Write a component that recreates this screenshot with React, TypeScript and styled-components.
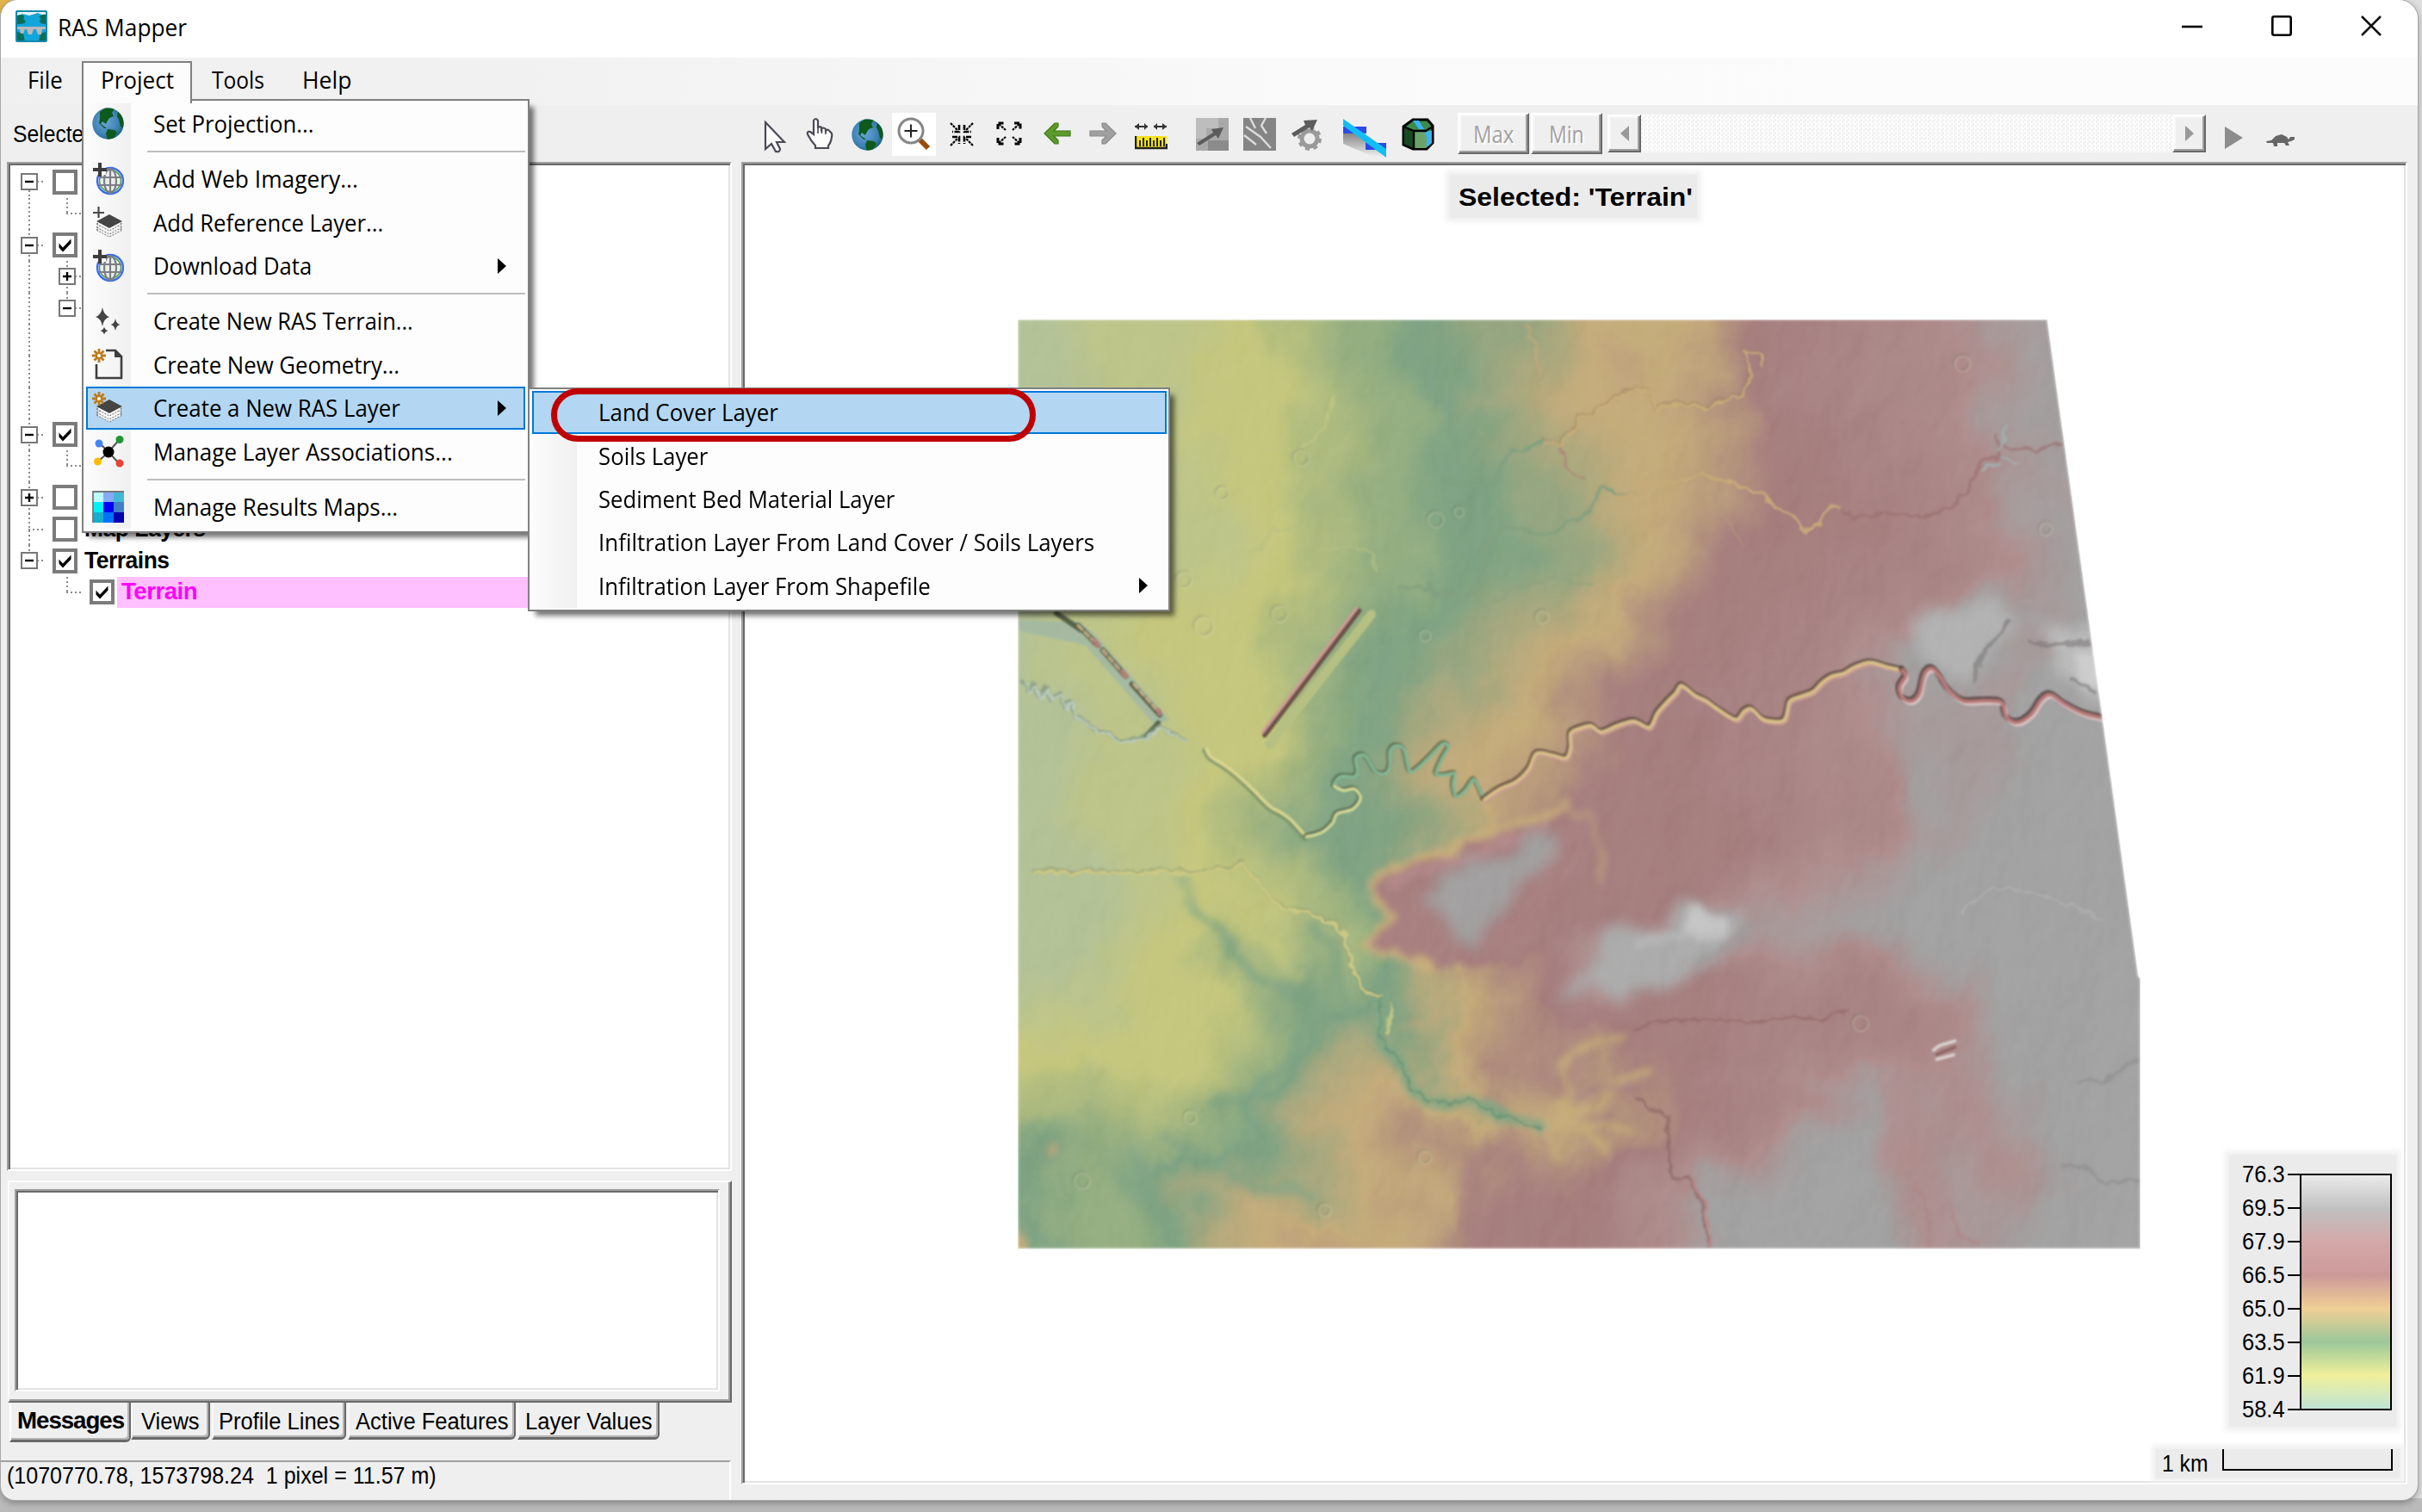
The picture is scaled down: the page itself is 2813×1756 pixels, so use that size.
import React, { useLayoutEffect, useRef, useState } from "react";
import styled, { createGlobalStyle, css } from "styled-components";

const UI = `"Open Sans", "Noto Sans", sans-serif`;
const CLASSIC = `"Liberation Sans", Arial, sans-serif`;

const Global = createGlobalStyle`
  * { box-sizing: border-box; }
  html, body { margin: 0; padding: 0; background: #bdbdbd; }
  body { width: 2813px; height: 1756px; overflow: hidden; font-family: ${UI}; font-size: 27px; color: #000; }
  svg { display: block; }
`;

/* ---------- text fitted to a fixed advance ---------- */

const FitOuter = styled.span<{ $w: number }>`
  display: inline-block;
  width: ${(p) => p.$w}px;
  white-space: pre;
  flex: none;
`;
const FitInner = styled.span`
  display: inline-block;
  transform-origin: left center;
`;
function Fit({ w, children }: { w: number; children: string }) {
  const ref = useRef<HTMLSpanElement>(null);
  const [k, setK] = useState(1);
  useLayoutEffect(() => {
    if (ref.current && ref.current.offsetWidth) setK(w / ref.current.offsetWidth);
  }, [w, children]);
  return (
    <FitOuter $w={w}>
      <FitInner ref={ref} style={{ transform: `scaleX(${k})` }}>
        {children}
      </FitInner>
    </FitOuter>
  );
}

/* ---------- window frame ---------- */

const Desktop = styled.div`
  width: 2813px;
  height: 1756px;
  padding: 0 5px 14px 1px;
  background: linear-gradient(to right, transparent 0 1400px, #dedede 1400px) no-repeat 0 0 / 100% 1740px,
    linear-gradient(to bottom, #e2b64c 0, #c9b58a 120px, #d4d4d4 260px, #d2d2d2 1650px, #b9b9b9 1756px);
  overflow: hidden;
`;
const Window = styled.div`
  position: relative;
  display: flex;
  flex-direction: column;
  width: 2807px;
  height: 1742px;
  background: #efefef;
  border-radius: 20px 22px 18px 16px;
  box-shadow: 0 0 0 1px #a8a8a8, 0 3px 8px rgba(0, 0, 0, 0.35);
`;
const TitleBar = styled.div`
  display: flex;
  align-items: center;
  height: 67px;
  flex: none;
  background: #fff;
  padding: 0 42px 7px 17px;
  border-radius: 20px 22px 0 0;
`;
const TitleText = styled.div`
  margin: 2px 0 0 12px;
  flex: 1;
`;
const Controls = styled.div`
  display: flex;
  align-items: center;
  gap: 80px;
`;
const MenuBar = styled.div`
  display: flex;
  height: 55px;
  flex: none;
  padding: 4px 0 0 9px;
  background: linear-gradient(to right, #f0f0f0, #f1f1f1 20%, #fbfbfb 60%, #fcfcfc);
`;
const MenuHead = styled.div<{ $open?: boolean; $w: number }>`
  display: flex;
  align-items: center;
  justify-content: center;
  width: ${(p) => p.$w}px;
  height: 47px;
  padding-bottom: 4px;
  ${(p) =>
    p.$open &&
    css`
      position: relative;
      z-index: 12;
      border: 2px solid #808080;
      border-bottom: none;
      background: #fcfcfc;
      height: 49px;
      padding-bottom: 8px;
    `}
`;
const ToolBar = styled.div`
  display: flex;
  align-items: flex-start;
  height: 66px;
  flex: none;
  background: #efefef;
`;
const SelectedCaption = styled.div`
  width: 871px;
  flex: none;
  padding: 19px 0 0 14px;
  font-family: ${CLASSIC};
`;
const Tool = styled.div<{ $gap: number; $w: number; $on?: boolean; $top?: number }>`
  flex: none;
  margin-left: ${(p) => p.$gap}px;
  margin-top: ${(p) => p.$top ?? 9}px;
  width: ${(p) => p.$w}px;
  height: 50px;
  display: flex;
  align-items: center;
  justify-content: center;
  background: ${(p) => (p.$on ? "#fff" : "transparent")};
`;
const RaisedButton = styled.div<{ $w: number; $h: number; $gap?: number; $top: number }>`
  flex: none;
  display: flex;
  align-items: center;
  justify-content: center;
  width: ${(p) => p.$w}px;
  height: ${(p) => p.$h}px;
  margin-left: ${(p) => p.$gap ?? 0}px;
  margin-top: ${(p) => p.$top}px;
  color: #a2a2a2;
  text-shadow: 2px 2px 0 #fff;
  background: #efefef;
  border: 2px solid;
  border-color: #fff #696969 #696969 #fff;
  box-shadow: inset -2px -2px 0 #a0a0a0, inset 2px 2px 0 #f8f8f8;
`;
const Track = styled.div`
  width: 617px;
  height: 44px;
  margin-top: 11px;
  flex: none;
  background: repeating-conic-gradient(#fff 0 25%, #f1f1f1 0 50%) 0 0 / 5px 5px;
`;

const Body = styled.div`
  display: flex;
  flex: 1;
  min-height: 0;
`;
const LeftColumn = styled.div`
  display: flex;
  flex-direction: column;
  width: 849px;
  margin-right: 11px;
  flex: none;
`;
const sunken = css`
  background: #fff;
  border: 2px solid;
  border-color: #a0a0a0 #fff #fff #a0a0a0;
  box-shadow: inset 2px 2px 0 #696969, inset -2px -2px 0 #e3e3e3;
`;
const TreePanel = styled.div`
  ${sunken}
  height: 1172px;
  margin-left: 7px;
  padding: 3px 2px 0 14px;
  overflow: hidden;
  flex: none;
`;
const TreeRow = styled.div`
  display: flex;
  align-items: center;
  height: 36.67px;
  font: bold 27px ${CLASSIC};
`;
type V = "none" | "full" | "top" | "bottom";
const Gutter = styled.div<{ $w: number; $x: number; $v: V; $h?: number }>`
  flex: none;
  display: flex;
  align-items: center;
  width: ${(p) => p.$w}px;
  height: 100%;
  padding-left: ${(p) => p.$x - 9}px;
  background-repeat: no-repeat;
  background-image: repeating-linear-gradient(to bottom, #8a8a8a 0 2px, transparent 2px 5px),
    repeating-linear-gradient(to right, #8a8a8a 0 2px, transparent 2px 5px);
  background-size: 2px ${(p) => (p.$v === "none" ? 0 : p.$v === "full" ? 100 : 50)}%, ${(p) => p.$h ?? 0}px 2px;
  background-position: ${(p) => p.$x}px ${(p) => (p.$v === "bottom" ? "100%" : "0")}, ${(p) => p.$x}px 50%;
`;
const ExpanderBox = styled.span`
  display: flex;
  width: 20px;
  height: 20px;
  border: 2px solid #777;
  background: #fff;
`;
function Expander({ plus }: { plus?: boolean }) {
  return (
    <ExpanderBox>
      <svg width="16" height="16" viewBox="0 0 16 16">
        <path d={plus ? "M3 8H13M8 3V13" : "M3 8H13"} stroke="#000" strokeWidth="2.4" />
      </svg>
    </ExpanderBox>
  );
}
const CheckBox = styled.span`
  flex: none;
  width: 29px;
  height: 29px;
  border: 4px solid #7b7b7b;
  background: #fff;
`;
function Check({ on }: { on?: boolean }) {
  return (
    <CheckBox>
      {on && (
        <svg width="21" height="21" viewBox="0 0 21 21">
          <path d="M3.5 8.5L8 13.5L17.5 3.5V8.5L8 18.5L3.5 13.5Z" fill="#000" />
        </svg>
      )}
    </CheckBox>
  );
}
const NodeName = styled.div<{ $hot?: boolean }>`
  display: flex;
  align-items: center;
  height: 100%;
  flex: 1;
  margin-left: 3px;
  padding-left: 5px;
  letter-spacing: -0.5px;
  color: ${(p) => (p.$hot ? "#ff00ff" : "#000")};
  background: ${(p) => (p.$hot ? "#ffc0ff" : "transparent")};
`;
const TabPanel = styled.div`
  margin: 11px 0 0 8px;
  height: 258px;
  flex: none;
  padding: 8px 12px 11px 6px;
  border: 2px solid;
  border-color: #fff #696969 #696969 #fff;
  box-shadow: inset -2px -2px 0 #a0a0a0;
`;
const MessageBox = styled.div`
  ${sunken}
  height: 100%;
`;
const Tabs = styled.div`
  display: flex;
  align-items: flex-start;
  height: 67px;
  flex: none;
  margin-left: 10px;
  font-family: ${CLASSIC};
`;
const Tab = styled.div<{ $w: number; $gap: number; $active?: boolean }>`
  display: flex;
  align-items: center;
  justify-content: center;
  width: ${(p) => p.$w}px;
  height: ${(p) => (p.$active ? 46 : 43)}px;
  margin-left: ${(p) => p.$gap}px;
  padding-top: ${(p) => (p.$active ? 0 : 4)}px;
  font-weight: ${(p) => (p.$active ? 700 : 400)};
  letter-spacing: ${(p) => (p.$active ? -1 : 0)}px;
  border: solid #696969;
  border-width: 0 2px 3px 0;
  border-left: 2px solid ${(p) => (p.$active ? "#fff" : "#f8f8f8")};
  border-radius: 0 0 6px 0;
  box-shadow: inset -2px -2px 0 #b4b4b4;
`;
const StatusBar = styled.div`
  flex: 1;
  margin-right: 1px;
  border-top: 2px solid #a0a0a0;
  border-right: 2px solid #fff;
  padding: 1px 0 0 7px;
  font-family: ${CLASSIC};
  border-bottom-left-radius: 16px;
`;
const MapPanel = styled.div`
  ${sunken}
  position: relative;
  width: 1935px;
  height: 1536px;
  padding: 181px 0 0 319px;
`;

/* items floating over the map canvas */
const Plate = styled.div`
  position: absolute;
  background: #ebebeb;
  box-shadow: 0 0 6px 5px #f1f1f1;
`;
const TitlePlate = styled(Plate)`
  top: 13px;
  left: 821px;
  width: 287px;
  height: 50px;
  padding: 2px 0 0 10px;
  font: bold 29px ${CLASSIC};
  display: flex;
  align-items: center;
`;
const LegendPlate = styled(Plate)`
  top: 1151px;
  right: 11px;
  width: 194px;
  height: 316px;
  display: flex;
  padding: 4px 0 0 15px;
  font: 27px ${CLASSIC};
`;
const LegendLabels = styled.div`
  display: flex;
  flex-direction: column;
  flex: none;
`;
const LegendItem = styled.div`
  display: flex;
  flex: none;
  align-items: center;
  height: 38.95px;
  width: 68px;
  justify-content: space-between;
`;
const Tick = styled.span`
  width: 15px;
  height: 2px;
  background: #000;
`;
const Ramp = styled.div`
  flex: none;
  width: 107px;
  height: 275px;
  margin-top: 18px;
  margin-left: -1px;
  border: 2px solid #000;
  background: linear-gradient(#ebebeb 0, #c0c0c0 14.3%, #d4a8a8 28.6%, #cc9999 42.9%, #f0cf95 57.1%, #9cc79a 71.4%, #f0f09a 85.7%, #c0e3d6 100%);
`;
const ScalePlate = styled(Plate)`
  right: 7px;
  bottom: 5px;
  width: 283px;
  height: 34px;
  display: flex;
  padding-left: 7px;
  font: 27px/34px ${CLASSIC};
`;
const ScaleBracket = styled.div`
  width: 198px;
  height: 25px;
  margin-left: 16px;
  border: 2px solid #000;
  border-top: none;
`;

/* ---------- drop-down menus ---------- */

const Menu = styled.div<{ $x: number; $y: number; $w: number; $pad: number }>`
  position: absolute;
  z-index: 10;
  left: ${(p) => p.$x}px;
  top: ${(p) => p.$y}px;
  width: ${(p) => p.$w}px;
  padding: 2px ${(p) => p.$pad}px ${(p) => p.$pad}px 3px;
  border: 2px solid #808080;
  background: #fdfdfd;
  box-shadow: 7px 7px 6px -2px rgba(0, 0, 0, 0.55);
`;
const MenuColumn = styled.div`
  background: linear-gradient(to right, #fcfcfc, #f0f0f0) no-repeat 0 0 / 52px 100%;
`;
const MenuRow = styled.div<{ $hot?: boolean }>`
  display: flex;
  align-items: center;
  height: 50.4px;
  border: 2px solid ${(p) => (p.$hot ? "#0078d7" : "transparent")};
  background: ${(p) => (p.$hot ? "#b3d7f3" : "transparent")};
  padding: 0 20px 1px 5px;
`;
const MenuIcon = styled.span<{ $w: number }>`
  width: ${(p) => p.$w}px;
  flex: none;
`;
const MenuText = styled.span`
  flex: 1;
  display: flex;
`;
const Separator = styled.div`
  height: 13.8px;
  display: flex;
  align-items: center;
  padding-left: 71px;
  &::after {
    content: "";
    flex: 1;
    height: 2px;
    background: #bdbdbd;
  }
`;
const Ring = styled.div`
  position: absolute;
  z-index: 14;
  left: 639px;
  top: 451px;
  width: 563px;
  height: 62px;
  border: 7px solid #c00000;
  border-radius: 32px;
`;
const SubArrow = () => (
  <svg width="10" height="18" viewBox="0 0 10 18">
    <path d="M0 0L10 9L0 18Z" fill="#000" />
  </svg>
);

/* ---------- icons ---------- */

const AppIcon = () => (
  <svg width="37" height="37" viewBox="0 0 37 37">
    <rect width="37" height="37" rx="2" fill="#12a5dc" />
    <path d="M2 2H35V7L26 3L16 6L8 4L2 8Z" fill="#e8f4f4" />
    <path d="M2 6C9 3 12 7 9 10C14 13 12 16 4 16H2ZM35 5C29 4 25 8 30 10C25 13 30 16 35 16Z" fill="#0a6e57" />
    <path d="M2 25L9 27L11 36H2ZM35 25L29 27L27 36H35Z" fill="#0a6e57" />
    <path d="M1 19H36V22H31L30 28H26L24 22H21L19 28H15L13 22H11L9 27H6L5 22H1Z" fill="#b9b9b9" />
    <rect x="1" y="1" width="35" height="35" rx="2" fill="none" stroke="#1389ac" strokeWidth="2" />
  </svg>
);
const Globe = ({ s = 37 }: { s?: number }) => (
  <svg width={s} height={s} viewBox="0 0 37 37">
    <defs>
      <radialGradient id="sea" cx=".42" cy=".45" r=".6">
        <stop offset="0" stopColor="#6aa5d6" />
        <stop offset=".7" stopColor="#3d80b5" />
        <stop offset="1" stopColor="#17637a" />
      </radialGradient>
      <clipPath id="ball"><circle cx="18.5" cy="18.5" r="18" /></clipPath>
    </defs>
    <circle cx="18.5" cy="18.5" r="18.2" fill="url(#sea)" />
    <g clipPath="url(#ball)" fill="#0d5a1c">
      <path d="M9 5L16 0L26 1L23 6L25 10L20 12L18 15L16 19L12 16L10 19L14 22L17 24L14 24L8 18L9 12Z" />
      <path d="M18 25L26 26L29 29L26 34L23 38H18L16 30Z" />
      <path d="M30 5L37 10V24L33 22L31 14L29 10Z" />
    </g>
  </svg>
);
const WebGlobe = () => (
  <svg width="37" height="40" viewBox="0 0 37 40">
    <circle cx="21" cy="22" r="15" fill="#e9efe9" stroke="#3b6cf0" strokeWidth="2.4" />
    <circle cx="21" cy="22" r="12.5" fill="none" stroke="#4a9a50" strokeWidth="1.5" />
    <g stroke="#7d7d86" strokeWidth="2.2" fill="none">
      <path d="M8 18H34M8 27H34M21 9V36" />
      <ellipse cx="21" cy="22" rx="7" ry="14" />
    </g>
    <path d="M0 0H16V15H0Z" fill="#f6f6f6" />
    <path d="M1 9H17M9 1V17" stroke="#3c3c3c" strokeWidth="4" />
  </svg>
);
const Sun = () => (
  <g stroke="#bd7a18" strokeWidth="2.8">
    <path d="M8 0V16M0 8H16M2.5 2.5L13.5 13.5M13.5 2.5L2.5 13.5" />
    <circle cx="8" cy="8" r="2" fill="#fff" stroke="none" />
  </g>
);
const Layers = ({ sun }: { sun?: boolean }) => (
  <svg width="37" height="37" viewBox="0 0 37 37">
    <g fill="#fafafa" stroke="#777" strokeWidth="1.1">
      <path d="M5 27L20 20L35 27L20 35Z" strokeDasharray="2 1.4" />
      <path d="M5 24L20 17L35 24L20 32Z" strokeDasharray="2 1.4" />
      <path d="M5 20L20 13L35 20L20 28Z" strokeDasharray="2 1.4" />
    </g>
    <path d="M5 17L20 9L35 17L20 25Z" fill="#454545" />
    {sun ? <Sun /> : <path d="M1 7H14M7.5 0V13" stroke="#4a4a4a" strokeWidth="2.2" />}
  </svg>
);
const Sparkles = () => (
  <svg width="37" height="37" viewBox="0 0 37 37" fill="#444">
    <path d="M12 3Q13.5 12 20 14Q13.5 16 12 25Q10.5 16 4 14Q10.5 12 12 3Z" />
    <path d="M27 16Q28 22 32.5 23Q28 24 27 30Q26 24 21.5 23Q26 22 27 16Z" />
    <path d="M14 26Q15 29 18.5 30Q15 31 14 34.5Q13 31 9.5 30Q13 29 14 26Z" />
  </svg>
);
const NewDoc = () => (
  <svg width="37" height="37" viewBox="0 0 37 37">
    <path d="M5 18V34H34V9L27 2H16" fill="none" stroke="#3f3f3f" strokeWidth="2.6" />
    <path d="M26 1L35 10H26Z" fill="#3f3f3f" />
    <Sun />
  </svg>
);
const Nodes = () => (
  <svg width="37" height="37" viewBox="0 0 37 37">
    <path d="M8 8L19 19L32 4M7 30L19 19L32 33" stroke="#555" strokeWidth="2" fill="none" />
    <circle cx="19" cy="19" r="6.5" fill="#000" />
    <circle cx="8" cy="9" r="4.5" fill="#4285f4" />
    <circle cx="32" cy="4.5" r="4.5" fill="#1e9632" />
    <circle cx="6.5" cy="30" r="4.5" fill="#fbbc05" />
    <circle cx="32" cy="32" r="4.5" fill="#ea4335" />
  </svg>
);
const mosaic = ["#bff", "#86aaf5", "#43b7d6", "#00f0f5", "#0000f5", "#4180c8", "#18adc8", "#0074f8", "#0000b0"];
const Mosaic = () => (
  <svg width="37" height="37" viewBox="0 0 37 37">
    {mosaic.map((c, i) => (
      <rect key={i} x={1 + (i % 3) * 12} y={1 + Math.floor(i / 3) * 12} width="12" height="12" fill={c} />
    ))}
    <path d="M1 37V1H37" fill="none" stroke="#777" strokeWidth="1.8" />
  </svg>
);
const Cursor = () => (
  <svg width="26" height="38" viewBox="0 0 26 38">
    <path d="M2 2V33L9 27L14 36Q19 37 19 33L15 25H24Z" fill="#fcfcfc" stroke="#4a4a58" strokeWidth="2.2" />
  </svg>
);
const Hand = () => (
  <svg width="32" height="38" viewBox="0 0 32 38">
    <path
      d="M9 20V4Q11 0 14 4V13Q15 10 18 12V14Q20 11 23 14V16Q26 13 28 17Q31 18 30 23Q29 30 26 33V36H11V33Q6 28 2 20Q1 16 5 17Z"
      fill="#fdfdfd" stroke="#4a4a58" strokeWidth="2.2"
    />
    <path d="M14 12V19M18.5 13V19M23 15V20" stroke="#4a4a58" strokeWidth="1.6" />
  </svg>
);
const Magnifier = () => (
  <svg width="40" height="40" viewBox="0 0 40 40">
    <path d="M26 26L36 36" stroke="#9c4a08" strokeWidth="6" />
    <circle cx="16" cy="16" r="14" fill="#fff" stroke="#868686" strokeWidth="3" />
    <path d="M8.5 16H23.5M16 8.5V23.5" stroke="#222" strokeWidth="2" />
  </svg>
);
const Collapse = () => (
  <svg width="28" height="28" viewBox="0 0 28 28" fill="none" stroke="#000" strokeWidth="2.2">
    <path d="M1 1L9 9M27 1L19 9M1 27L9 19M27 27L19 19" strokeDasharray="3 1" />
    <path d="M11 3V11H3M17 3V11H25M3 17H11V25M25 17H17V25" strokeWidth="2.6" strokeDasharray="6 1.5" />
  </svg>
);
const Expand = () => (
  <svg width="30" height="28" viewBox="0 0 30 28" fill="none" stroke="#000" strokeWidth="2.2">
    <path d="M3 3L11 10M27 3L19 10M3 25L11 18M27 25L19 18" strokeDasharray="3 1" />
    <path d="M2 9V2H9M21 2H28V9M2 19V26H9M28 19V26H21" strokeWidth="3" strokeDasharray="6 1.5" />
  </svg>
);
const Arrow = ({ color, edge, flip }: { color: string; edge: string; flip?: boolean }) => (
  <svg width="32" height="28" viewBox="0 0 32 28">
    <g transform={flip ? "translate(32 0) scale(-1 1)" : undefined}>
      <path d="M1 14L13 2L17 2V6L12 11H31V17H12L17 22V26H13Z" fill={color} stroke={edge} strokeWidth="1.2" />
    </g>
  </svg>
);
const Ruler = () => (
  <svg width="38" height="32" viewBox="0 0 38 32">
    <path d="M0 5H15M22 5H37" stroke="#333" strokeWidth="2" />
    <path d="M0 5L5 1V9ZM37 5L32 1V9Z" fill="#333" />
    <path d="M15 5L11 1V9ZM22 5L26 1V9Z" fill="#333" />
    <rect x="1" y="16" width="36" height="13" fill="#f4e11b" />
    <path d="M1 16V30H37V25" stroke="#222" strokeWidth="2.4" fill="none" />
    <path d="M6 28V21M10 28V18M14 28V21M18 28V18M22 28V21M26 28V18M30 28V21M34 28V18" stroke="#222" strokeWidth="2" />
  </svg>
);
const Velocity = () => (
  <svg width="38" height="38" viewBox="0 0 38 38">
    <rect width="38" height="38" fill="#a9a9a9" />
    <path d="M0 0H26V12H12V24H0Z" fill="#bdbdbd" />
    <path d="M14 26H38V38H14Z" fill="#8b8b8b" />
    <path d="M1 29L20 17L18 13L32 11L26 24L23 20L4 32Z" fill="#5c5c5c" />
  </svg>
);
const Particles = () => (
  <svg width="38" height="38" viewBox="0 0 38 38">
    <rect width="38" height="38" fill="#858585" />
    <path d="M8 0L14 12M26 0L21 9L27 18M3 10L20 22L32 35M1 20L15 31" stroke="#dcdcdc" strokeWidth="2.4" fill="none" />
  </svg>
);
const GearArrow = () => (
  <svg width="37" height="38" viewBox="0 0 37 38">
    <circle cx="22" cy="24" r="9" fill="#eee" stroke="#9a9a9a" strokeWidth="5" />
    <circle cx="22" cy="24" r="12.5" fill="none" stroke="#9a9a9a" strokeWidth="3" strokeDasharray="5 4.8" />
    <path d="M1 18L17 8L15 3L31 2L25 15L22 11L4 22Z" fill="#5c5c5c" />
  </svg>
);
const Profile = () => (
  <svg width="52" height="46" viewBox="0 0 52 46">
    <defs>
      <linearGradient id="soil" x1="0" y1="0" x2="0" y2="1">
        <stop offset="0" stopColor="#777" />
        <stop offset="1" stopColor="#efefef" />
      </linearGradient>
    </defs>
    <path d="M1 14L28 20V32H51V45H36L1 30Z" fill="url(#soil)" />
    <path d="M1 10H28V18H1ZM27 29H51V37H27Z" fill="#2f48ea" />
    <path d="M1 1L51 36V46L1 9Z" fill="#13bdf5" />
  </svg>
);
const Cube = () => (
  <svg width="38" height="38" viewBox="0 0 38 38">
    <path d="M2 10L13 2H30L36 9V29L29 36H13L2 31Z" fill="#3e8a4b" stroke="#000" strokeWidth="3" />
    <path d="M3 10L14 15V35L3 30Z" fill="#174a22" />
    <path d="M14 15H35V29L28 35H14Z" fill="#6aa36a" />
    <path d="M13 3H20L26 13H20ZM27 15H34V30L29 34V24Z" fill="#39b3f5" />
    <path d="M2 10L14 15H28L36 10M14 15V36" stroke="#000" strokeWidth="2.4" fill="none" />
  </svg>
);
const Turtle = () => (
  <svg width="34" height="17" viewBox="0 0 34 17">
    <path d="M0 9L6 8L11 3L18 1L24 4L26 7L28 4H33V7L29 9L25 10L27 14H23L21 11H13L13 15H9L8 11L1 11Z" fill="#666" />
  </svg>
);
const Minimize = () => (
  <svg width="24" height="24" viewBox="0 0 24 24"><path d="M0 13H24" stroke="#000" strokeWidth="2.6" /></svg>
);
const Maximize = () => (
  <svg width="24" height="24" viewBox="0 0 24 24">
    <rect x="1.3" y="1.3" width="21.4" height="21.4" rx="2" fill="none" stroke="#000" strokeWidth="2.6" />
  </svg>
);
const Close = () => (
  <svg width="24" height="24" viewBox="0 0 24 24"><path d="M1 1L23 23M23 1L1 23" stroke="#111" strokeWidth="2.5" /></svg>
);
const Tri = ({ left }: { left?: boolean }) => (
  <svg width="10" height="18" viewBox="0 0 10 18">
    <path d={left ? "M10 0L0 9L10 18Z" : "M0 0L10 9L0 18Z"} fill="#999" />
  </svg>
);
const Play = () => (
  <svg width="22" height="26" viewBox="0 0 22 26"><path d="M1 0L22 13L1 26Z" fill="#8c8c8c" /></svg>
);

/* ---------- terrain raster ---------- */

/* Sampled surface: each letter is a third of a ramp class, 'a' lowest. */
const DEM = [
  "bbccccddeeffgghhhijjjjlmmnnoooprrssss",
  "bbccccdddeffggghiijkjjkmmnnooopprrsss",
  "bbccccddddeffghiijjjjklmnnnoooprrssss",
  "bbcccddddeefffghiijjjjkkmmnnooprsrsss",
  "bbbcccdddeeffgghhiijjjklmmnnnoopqrsss",
  "bbbcccdddefffggghhijjjklmmmnnnoqrrrss",
  "bbbccccddeeffggghhijjkklmmmmnnoprsrss",
  "bbbccccddeefffggghhijkmmmmnnnnooprsss",
  "bbbcccddddeffggghhijklmmmmnnnnooprsss",
  "bcccddddeeffgghhiijjlmmmnnnooqsssrsss",
  "bcccddddeefgghhiijjklmmnnnoqsttsqsttt",
  "bccccddddefgghhijjlmmmnnnooprssqsssuu",
  "bbcccdddefgghiijjllmmmnnnoopqrrrsssss",
  "bbcccddddfgghijjjklmmmmnnoopqrrrsssss",
  "bbccccddefghijjjkklmmmnnnooopsrrsssss",
  "bbcccddeefgghijkklmmmmmnnnoopsrrsssss",
  "bbcccdeefgggghijlmnmmmmmnnooorrssssss",
  "bbbccddeefgghiloqommmmmnnoqqqssssssss",
  "bbbcccddeeffimpqommmmmnqpqrrsssssssss",
  "bbbccdeddeefgkoonmmmnqsrrrsssssssssss",
  "bbbcddfeeffghklmlnqsssqpqqppqssssssss",
  "bbccdddeggfggijkmnoqonmnopnnooqssssss",
  "ccccdddefgghgijklmmmmmmnnnnnnoprsssss",
  "ddddddeefgiigikkllkmmmmnnonnnoprsssss",
  "eeedddefghijjgkmlmkmlmnnoqrspqpqsssss",
  "eeeeeefgijjjlihjjjkllmmnnoqspqpprssss",
  "ggfffgfghijklllmljkklmnnqrssppqprssss",
  "gffggiighijjjjmlmlmmnnqqrssspprpprsss",
  "gfffggijjhijkjmlmmmopqssssssrprqqssss",
  "hffffgijjkkjjlmmmmmnpqssssssspqrsssss",
];
const ramp = [
  [172, 192, 164],
  [199, 200, 126],
  [127, 164, 132],
  [197, 172, 124],
  [166, 127, 127],
  [176, 142, 142],
  [163, 163, 163],
  [208, 208, 208],
];
const channel = (i: number) => ramp.map((c) => (c[i] / 255).toFixed(3)).join(" ");

/* Turns "M x y L x y ..." polylines into rounded Catmull-Rom curves. */
function smooth(d: string) {
  return d
    .split("M")
    .filter(Boolean)
    .map((part) => {
      const p = part.split("L").map((s) => s.trim().split(/\s+/).map(Number));
      let out = `M${p[0][0]} ${p[0][1]}`;
      for (let i = 0; i < p.length - 1; i++) {
        const a = p[Math.max(0, i - 1)];
        const b = p[i];
        const c = p[i + 1];
        const e = p[Math.min(p.length - 1, i + 2)];
        const f = (n: number) => n.toFixed(1);
        out += `C${f(b[0] + (c[0] - a[0]) / 6)} ${f(b[1] + (c[1] - a[1]) / 6)} ${f(c[0] - (e[0] - b[0]) / 6)} ${f(
          c[1] - (e[1] - b[1]) / 6
        )} ${c[0]} ${c[1]}`;
      }
      return out;
    })
    .join("");
}

const mainRiver = smooth(
  "M1361 465L1349 462L1337 456L1328 450L1322 453L1315 463L1306 468L1299 464L1296 455L1284 454L1271 454L1261 446L1256 438L1251 433L1246 437L1243 449L1238 454L1232 452L1230 445L1234 438L1232 434"
);
const midRiver = smooth(
  "M1232 434L1222 432L1211 429L1201 432L1194 436L1186 438L1180 442L1174 448L1166 451L1159 454L1157 462L1154 467L1142 466L1134 459L1129 461L1124 466L1112 459L1105 454L1097 450L1089 444L1085 449L1079 455L1073 462L1068 471L1058 467L1047 470L1037 474L1030 470L1022 472L1017 475L1017 484L1014 491L1005 489L995 488L990 498L982 506L971 511L961 518"
);
const meander = smooth(
  "M961 518L957 509L954 505L949 512L943 516L941 508L942 501L936 502L930 501L934 491L938 484L934 482L924 492L914 500L911 493L909 485L904 483L900 487L900 496L897 501L891 500L887 494L883 489L878 491L879 499L877 503L868 503L864 509L870 512L877 511L881 517L876 524L866 527L863 533L856 539L846 542"
);
const lowerRiver = smooth("M846 542L836 531L829 526L822 522L811 511L800 501L792 495L784 490L781 485");
const southA =
  "M671 565L720 565L773 565.5L805 560L814 570L822 582L836 590L847 591L856 596L865 599L871 606L873 618L876 630L884 643L894 646";
const southB = "M894 646L894 660L893 672L898 679L909 691L911 698L913 704L925 714L940 715L952 712L971 722L985 726L998 731";
const northA1 = "M1000 285L1011 288L1016 280L1022 271L1032 268L1041 263L1050 256L1059 252L1069 255L1073 266L1088 261L1105 264L1118 259L1129 255L1134 243L1130 229L1141 229L1142 238";
const northA0 = "M925 380L930 384M933 312L950 315L968 313L972 302L978 293L986 292L992 289L1000 285";
const northB =
  "M906 380L918 380L930 384L938 385L948 386L957 383L960 372L960 358L966 348L975 342L990 344L1007 346L1014 339L1030 332L1034 322L1037 314L1046 321L1061 321";
const northB2 = "M1046 322L1061 321L1066 313L1084 312L1102 307L1119 312";
const northC = "M1119 312L1141 321L1150 328L1158 332L1166 341L1171 344L1178 338L1184 327L1192 329";
const northD = "M1192 329L1201 336L1215 333L1230 333L1243 335L1255 332L1268 325L1276 316L1281 300L1295 296L1293 281M1296 288L1310 292L1326 290L1336 286";
const eastSouth = "M1058 667L1068 664L1080 660L1108 661L1136 662L1158 659L1182 660L1194 654";
const southGully = "M1060 712L1070 719L1080 722L1080 738L1082 761L1095 765L1103 782L1104 796L1107 808";
const westSquiggle =
  "M662 441L665 448L669 443L673 450L677 446L681 453L686 450L689 458L693 454L696 464L703 467L709 473L716 474L722 478L733 479L745 475L751 470L758 475L766 479";

const mound =
  "M1012 523L1000 531L987 534L968 539L949 546L940 554L933 555L920 558L906 562L897 568L890 574L893 584L903 592L896 601L885 612L900 616L917 619L932 626L960 626L990 606L1012 572L1026 545Z";

const craters: [number, number, number][] = [
  [842, 296, 5], [929, 336, 5], [766, 375, 5], [828, 397, 5], [779, 405, 6], [922, 411, 3.5], [1270, 235, 5],
  [1324, 342, 4], [1204, 662, 5], [700, 764, 5], [770, 723, 4], [857, 783, 4],
  [944, 331, 3], [998, 399, 4], [922, 749, 4], [791, 319, 4],
];

const Terrain = () => (
  <svg width="1304" height="1080" viewBox="659 207 727 602" preserveAspectRatio="none">
    <defs>
      <clipPath id="extent">
        <path d="M659 207H1325.5L1384.500 632L1386 634V808.500H659Z" />
      </clipPath>
      <filter id="surface" filterUnits="userSpaceOnUse" x="600" y="150" width="860" height="720" colorInterpolationFilters="sRGB">
        <feGaussianBlur stdDeviation="9" result="smooth" />
        <feTurbulence type="fractalNoise" baseFrequency="0.022 0.018" numOctaves="5" seed="11" result="n" />
        <feDisplacementMap in="smooth" in2="n" scale="42" xChannelSelector="R" yChannelSelector="G" result="d" />
        <feComponentTransfer>
          <feFuncR type="table" tableValues={channel(0)} />
          <feFuncG type="table" tableValues={channel(1)} />
          <feFuncB type="table" tableValues={channel(2)} />
        </feComponentTransfer>
      </filter>
      <filter id="relief" filterUnits="userSpaceOnUse" x="600" y="150" width="860" height="720" colorInterpolationFilters="sRGB">
        <feTurbulence type="fractalNoise" baseFrequency="0.024 0.016" numOctaves="4" seed="4" result="n" />
        <feColorMatrix in="n" type="matrix" values="0 0 0 0 0  0 0 0 0 0  0 0 0 0 0  1 0 0 0 0" result="h" />
        <feDiffuseLighting in="h" surfaceScale="3.2" diffuseConstant="0.72" lightingColor="#ffffff">
          <feDistantLight azimuth="225" elevation="44" />
        </feDiffuseLighting>
      </filter>
      <filter id="rough" filterUnits="userSpaceOnUse" x="600" y="150" width="860" height="720">
        <feTurbulence type="fractalNoise" baseFrequency="0.120" numOctaves="2" seed="7" result="n" />
        <feDisplacementMap in="SourceGraphic" in2="n" scale="7" xChannelSelector="R" yChannelSelector="G" />
        <feGaussianBlur stdDeviation="0.550" />
      </filter>
      <filter id="soft" filterUnits="userSpaceOnUse" x="600" y="150" width="860" height="720">
        <feGaussianBlur stdDeviation="0.600" />
      </filter>
      <filter id="haze" filterUnits="userSpaceOnUse" x="600" y="150" width="860" height="720">
        <feTurbulence type="fractalNoise" baseFrequency="0.080" numOctaves="3" seed="3" result="n" />
        <feDisplacementMap in="SourceGraphic" in2="n" scale="10" xChannelSelector="R" yChannelSelector="G" />
        <feGaussianBlur stdDeviation="2.400" />
      </filter>
      <filter id="cloud" filterUnits="userSpaceOnUse" x="600" y="150" width="860" height="720">
        <feTurbulence type="fractalNoise" baseFrequency="0.050" numOctaves="4" seed="9" result="n" />
        <feDisplacementMap in="SourceGraphic" in2="n" scale="22" xChannelSelector="R" yChannelSelector="G" />
        <feGaussianBlur stdDeviation="4.500" />
      </filter>
    </defs>
    <g clipPath="url(#extent)">
      <g filter="url(#surface)" shapeRendering="crispEdges">
        {DEM.map((row, j) =>
          row.split("").map((ch, i) => {
            const v = Math.round(((ch.charCodeAt(0) - 97) / 21) * 255);
            const first = j === 0;
            const last = j === DEM.length - 1;
            return (
              <rect
                key={`${i}-${j}`}
                x={i === 0 ? 600 : 659 + i * 20}
                y={first ? 150 : 207 + j * 20.07}
                width={i === 0 ? 79 : i === 36 ? 80 : 20}
                height={first ? 77.5 : last ? 90 : 20.5}
                fill={`rgb(${v},${v},${v})`}
              />
            );
          })
        )}
      </g>

      <g filter="url(#haze)" fill="none" strokeLinecap="round" strokeLinejoin="round">
        <path d="M767 570L773 590L790 600L800 618L812 632L834 642L850 655L842 668L836 690L818 700L808 712L784 714" stroke="#7ea485" strokeWidth="7" opacity=".7" />
        <path d="M768 574L780 588L806 596L824 616L838 630" stroke="#c5c77e" strokeWidth="9" opacity=".45" />
        <path d="M850 600L862 612L866 632L872 652" stroke="#7ea485" strokeWidth="7" opacity=".6" />
        <path d="M733 745L742 770L756 786L764 800M754 738L776 746L800 762L812 770L838 768L848 776" stroke="#7ea485" strokeWidth="7" opacity=".6" />
        <path d="M660 790L668 800L678 808" stroke="#7ea485" strokeWidth="6" opacity=".8" />
        <path d="M655 794L662 800L666 812H650Z" fill="#c5ac7b" stroke="none" />
        <circle cx="680" cy="744" r="7" stroke="#7a9f7f" strokeWidth="3" opacity=".8" />
        <circle cx="681" cy="744" r="3.5" fill="#b7a67c" />
        <path d={mound} fill="#a88080" stroke="none" />
        <path d="M1014 521L1000 529L987 532L968 537L949 544L938 553L920 556L906 560L895 566L888 574L891 585L901 593L893 602L883 613L900 618L917 621L934 630" stroke="#c8ae7a" strokeWidth="5" />
        <path d="M1012 523L1030 530L1036 545L1037 572" stroke="#ba9c7c" strokeWidth="3" />
        <path d="M900 572L930 562L970 548L1000 536" stroke="#b68a8c" strokeWidth="6" />
        <path d="M932 630L945 632L966 628" stroke="#b99c7e" strokeWidth="5" opacity=".8" />
      </g>
      <g filter="url(#cloud)">
        <path d="M932 566L975 550L1006 536L1006 552L996 566L982 576L968 600L952 614L938 600L922 584Z" fill="#a2a0a0" />
        <path d="M1012 650L1016 632L1036 624L1034 604L1050 598L1066 608L1083 600L1094 582L1106 590L1126 592L1132 604L1108 620L1084 640L1072 644L1060 638L1048 648L1032 640Z" fill="#acacac" />
        <path d="M1232 408L1252 396L1290 390L1302 398L1288 416L1278 440L1262 438L1250 424Z" fill="#b2b2b2" />
        <path d="M1316 406L1356 404L1366 450L1344 444Z" fill="#bcbcbc" />
      </g>
      <g filter="url(#haze)" fill="none" strokeLinecap="round" strokeLinejoin="round">
        <path d="M1088 600L1098 584L1106 592L1120 596L1116 606L1098 610Z" fill="#c8c8c8" stroke="none" opacity=".9" />
        <path d="M1060 612L1092 604L1112 606" stroke="#bdbdbd" strokeWidth="5" opacity=".7" />
        <path d="M1098 624L1116 616L1130 602" stroke="#8f8f8f" strokeWidth="3" opacity=".7" />
        <path d="M1344 424L1358 420L1362 446L1346 444Z" fill="#cdcdcd" stroke="none" />
        <path d="M984 729L1011 725L1017 704L1011 689L1025 678L1052 671M1011 725L1036 717L1052 697L1068 694M1000 730L1030 728L1056 732M1003 733L1010 752M1025 728L1040 744" stroke="#c6ad7a" strokeWidth="4.500" opacity=".9" />
        <path d="M930 706L950 706L962 694M920 700L930 690L936 676M906 664L920 664M930 660L940 650L952 640" stroke="#c2a97c" strokeWidth="4" opacity=".55" />
        <path d="M1022 710L1034 706M1032 726L1044 724M1040 704L1060 706" stroke="#a68080" strokeWidth="3" />
        <path d={smooth(southB)} stroke="#7da685" strokeWidth="7" opacity=".9" />
      </g>

      <rect x="659" y="207" width="728" height="602" filter="url(#relief)" opacity="0.240" style={{ mixBlendMode: "soft-light" }} />

      <path d="M659 402L700 403L710 412L757 466L748 470L703 418L659 408Z" fill="#a3b9a4" filter="url(#soft)" opacity=".9" />
      <g fill="none" filter="url(#soft)" strokeLinecap="round">
        <path d="M888 398L822 482" stroke="#b6c083" strokeWidth="6" />
        <path d="M880 395.500L819 476" stroke="#6b5049" strokeWidth="3.200" />
        <path d="M878.400 394L817.800 474" stroke="#cf9d94" strokeWidth="2" />
        <path d="M684 397L700 408M698 405L711 418M714 421L729 438M733 443L751 463" stroke="#566049" strokeWidth="3.400" />
        <path d="M698 405L710 417M714 421L728 437M734 443L751 462" stroke="#d0b48c" strokeWidth="1.500" strokeDasharray="4 2" />
        <path d="M709 415L711 418M727 435L729 438M750 460L751 462" stroke="#b57f78" strokeWidth="3" />
        <path d="M742 477L750 468" stroke="#56624c" strokeWidth="3" />
      </g>

      <g filter="url(#rough)" fill="none" strokeLinejoin="round" strokeLinecap="round">
        <path d={westSquiggle} stroke="#7d927f" strokeWidth="2.600" opacity=".7" />
        <path d={westSquiggle} stroke="#bccdc0" strokeWidth="1.400" transform="translate(1 1)" />
        <path d={northA1} stroke="#94775f" strokeWidth="1.800" opacity=".4" transform="translate(-.8 -1.200)" />
        <path d={northA1} stroke="#c9af79" strokeWidth="1.800" opacity=".9" />
        <path d={northA0} stroke="#7fa181" strokeWidth="2.200" />
        <path d={northB} stroke="#84a080" strokeWidth="2" />
        <path d={northB2} stroke="#c6ab78" strokeWidth="1.800" />
        <path d={northC} stroke="#c6a87a" strokeWidth="2.200" />
        <path d={northD} stroke="#9a6f6f" strokeWidth="2" opacity=".65" />
        <path d="M1294 292L1300 276M1297 296L1306 300M1283 304L1294 300" stroke="#a3aaaa" strokeWidth="2" />
        <path d={eastSouth} stroke="#966c6c" strokeWidth="1.600" opacity=".8" />
        <path d={southGully} stroke="#8e6868" strokeWidth="2.200" opacity=".7" />
        <path d="M1096 765L1105 782L1107 808" stroke="#bd8989" strokeWidth="1.600" />
        <path d="M1112 312L1112 326L1120 340L1128 352" stroke="#b3957c" strokeWidth="1.800" opacity=".7" />
        <path d="M791 312L800 298L812 290L838 291L852 286L858 276L864 258" stroke="#c3c682" strokeWidth="2" opacity=".7" />
        <path d="M800 356L816 356L824 342L838 345L848 372M852 356L876 354L888 358L891 370" stroke="#b5bf84" strokeWidth="1.800" opacity=".6" />
        <path d="M988 210L994 224L998 244" stroke="#bda77c" strokeWidth="1.800" opacity=".8" />
        <path d="M957 383L962 393L985 378L1012 374L1030 380" stroke="#8ea37d" strokeWidth="1.400" opacity=".7" />
        <path d="M1010 289L1014 302L1025 311" stroke="#ac8a79" strokeWidth="1.400" />
        <path d="M1300 402L1292 414L1284 422L1278 440M1314 416L1330 418L1352 416M1342 440L1356 448" stroke="#767272" strokeWidth="3" opacity=".55" />
        <path d="M1270 590L1290 575L1310 577L1340 586L1362 596" stroke="#b8b8b8" strokeWidth="1.800" opacity=".5" />
        <path d="M1386 684L1374 692L1364 700L1346 700M1386 764L1364 766L1350 756L1336 756" stroke="#8e8e8e" strokeWidth="2.200" opacity=".6" />
        <path d="M1240 765L1248 785L1250 808M1262 780L1268 800L1280 806" stroke="#b18686" strokeWidth="2" opacity=".6" />
        <path d={southA} stroke="#8f9c6d" strokeWidth="2.600" opacity=".5" transform="translate(-.8 -1)" />
        <path d={southA} stroke="#cbc884" strokeWidth="2" />
        <path d={southB} stroke="#648f72" strokeWidth="1.200" opacity=".7" />
        <path d="M901 650L899 668" stroke="#bfc684" strokeWidth="1.800" />
      </g>

      <g filter="url(#soft)" fill="none" strokeLinejoin="round" strokeLinecap="round">
        <path d={lowerRiver} stroke="#6e8a66" strokeWidth="3.400" transform="translate(-.8 1)" opacity=".7" />
        <path d={lowerRiver} stroke="#dcd78f" strokeWidth="2" />
        <path d={meander} stroke="#55654a" strokeWidth="3" transform="translate(-.8 -.8)" opacity=".75" />
        <path d={meander} stroke="#83b796" strokeWidth="1.900" />
        <path d={smooth("M864 509L870 512L877 511L881 517L876 524L866 527L863 533L856 539L846 542")} stroke="#dcdc95" strokeWidth="1.600" />
        <path d={midRiver} stroke="#5f4a40" strokeWidth="3.400" transform="translate(-.7 -1.100)" opacity=".75" />
        <path d={midRiver} stroke="#c99d92" strokeWidth="2" transform="translate(.8 1.400)" />
        <path d={midRiver} stroke="#dbc488" strokeWidth="1.900" />
        <path d={mainRiver} stroke="#54403f" strokeWidth="3.800" transform="translate(-.8 -1.100)" opacity=".8" />
        <path d={mainRiver} stroke="#d8c4c4" strokeWidth="2" transform="translate(1 1.600)" />
        <path d={mainRiver} stroke="#b97a78" strokeWidth="2.200" />
        {craters.map(([x, y, r], i) => (
          <g key={i} opacity=".26" strokeWidth="1.400">
            <circle cx={x} cy={y} r={r} stroke="#5f6b5c" />
            <circle cx={x + 0.9} cy={y + 0.9} r={r} stroke="#e6e2c0" opacity=".8" />
          </g>
        ))}
        <path d="M1252 680L1256 677L1266 674M1254 686L1265 683" stroke="#dcd6d6" strokeWidth="2" />
        <path d="M1254 683L1266 678" stroke="#8f6464" strokeWidth="2" />
        <path d="M659 207H1325.5L1384.500 632L1386 634V808.500H659Z" stroke="#fff" strokeWidth="1.600" opacity=".4" />
      </g>
    </g>
  </svg>
);

/* ---------- content ---------- */

type Item = { label: string; w: number; icon?: React.ReactNode; sub?: boolean; hot?: boolean } | null;
const projectMenu: Item[] = [
  { label: "Set Projection...", w: 187, icon: <Globe /> },
  null,
  { label: "Add Web Imagery...", w: 238, icon: <WebGlobe /> },
  { label: "Add Reference Layer...", w: 267, icon: <Layers /> },
  { label: "Download Data", w: 184, icon: <WebGlobe />, sub: true },
  null,
  { label: "Create New RAS Terrain...", w: 302, icon: <Sparkles /> },
  { label: "Create New Geometry...", w: 286, icon: <NewDoc /> },
  { label: "Create a New RAS Layer", w: 287, icon: <Layers sun />, sub: true, hot: true },
  { label: "Manage Layer Associations...", w: 348, icon: <Nodes /> },
  null,
  { label: "Manage Results Maps...", w: 284, icon: <Mosaic /> },
];
const layerMenu: Item[] = [
  { label: "Land Cover Layer", w: 209, hot: true },
  { label: "Soils Layer", w: 127 },
  { label: "Sediment Bed Material Layer", w: 344 },
  { label: "Infiltration Layer From Land Cover / Soils Layers", w: 576 },
  { label: "Infiltration Layer From Shapefile", w: 386, sub: true },
];
const legend = ["76.3", "69.5", "67.9", "66.5", "65.0", "63.5", "61.9", "58.4"];

function Items({ items, iconWidth }: { items: Item[]; iconWidth: number }) {
  return (
    <MenuColumn>
      {items.map((it, i) =>
        it ? (
          <MenuRow key={i} $hot={it.hot}>
            <MenuIcon $w={iconWidth}>{it.icon}</MenuIcon>
            <MenuText><Fit w={it.w}>{it.label}</Fit></MenuText>
            {it.sub && <SubArrow />}
          </MenuRow>
        ) : (
          <Separator key={i} />
        )
      )}
    </MenuColumn>
  );
}

const Trunk = ({ v, children, dots = 20 }: { v: V; children?: React.ReactNode; dots?: number }) => (
  <Gutter $w={37} $x={9} $v={v} $h={dots}>{children}</Gutter>
);
const Branch = ({ v, h, w = 43, children }: { v: V; h?: number; w?: number; children?: React.ReactNode }) => (
  <Gutter $w={w} $x={16} $v={v} $h={h}>{children}</Gutter>
);

export default function App() {
  return (
    <Desktop>
      <Global />
      <Window>
        <TitleBar>
          <AppIcon />
          <TitleText><Fit w={150}>RAS Mapper</Fit></TitleText>
          <Controls>
            <Minimize />
            <Maximize />
            <Close />
          </Controls>
        </TitleBar>
        <MenuBar>
          <MenuHead $w={85}><Fit w={41}>File</Fit></MenuHead>
          <MenuHead $w={128} $open><Fit w={85}>Project</Fit></MenuHead>
          <MenuHead $w={106}><Fit w={61}>Tools</Fit></MenuHead>
          <MenuHead $w={100}><Fit w={57}>Help</Fit></MenuHead>
        </MenuBar>
        <ToolBar>
          <SelectedCaption><Fit w={96}>Selected</Fit></SelectedCaption>
          <Tool $gap={15} $w={26} $top={12}><Cursor /></Tool>
          <Tool $gap={23} $w={32} $top={8}><Hand /></Tool>
          <Tool $gap={20} $w={38} $top={9}><Globe s={37} /></Tool>
          <Tool $gap={10} $w={51} $on><Magnifier /></Tool>
          <Tool $gap={15} $w={30}><Collapse /></Tool>
          <Tool $gap={25} $w={30} $top={8}><Expand /></Tool>
          <Tool $gap={25} $w={32} $top={8}><Arrow color="#5d9a2c" edge="#3f7a17" /></Tool>
          <Tool $gap={21} $w={32} $top={8}><Arrow color="#a0a0a0" edge="#8a8a8a" flip /></Tool>
          <Tool $gap={21} $w={38} $top={11}><Ruler /></Tool>
          <Tool $gap={33} $w={38}><Velocity /></Tool>
          <Tool $gap={17} $w={38}><Particles /></Tool>
          <Tool $gap={17} $w={37}><GearArrow /></Tool>
          <Tool $gap={23} $w={52} $top={13}><Profile /></Tool>
          <Tool $gap={17} $w={38}><Cube /></Tool>
          <RaisedButton $gap={27} $w={83} $h={48} $top={9}><Fit w={47}>Max</Fit></RaisedButton>
          <RaisedButton $gap={2} $w={83} $h={48} $top={9}><Fit w={41}>Min</Fit></RaisedButton>
          <RaisedButton $gap={6} $w={39} $h={44} $top={11}><Tri left /></RaisedButton>
          <Track />
          <RaisedButton $w={39} $h={44} $top={11}><Tri /></RaisedButton>
          <Tool $gap={21} $w={22} $top={13}><Play /></Tool>
          <Tool $gap={27} $w={34} $top={16}><Turtle /></Tool>
        </ToolBar>
        <Body>
          <LeftColumn>
            <TreePanel>
              <TreeRow><Trunk v="bottom"><Expander /></Trunk><Check /></TreeRow>
              <TreeRow><Trunk v="full" dots={0} /><Branch v="top" h={20} /></TreeRow>
              <TreeRow><Trunk v="full"><Expander /></Trunk><Check on /></TreeRow>
              <TreeRow><Trunk v="full" dots={0} /><Branch v="full" h={20}><Expander plus /></Branch></TreeRow>
              <TreeRow><Trunk v="full" dots={0} /><Branch v="top" h={20}><Expander /></Branch></TreeRow>
              <TreeRow><Trunk v="full" dots={0} /></TreeRow>
              <TreeRow><Trunk v="full" dots={0} /></TreeRow>
              <TreeRow><Trunk v="full" dots={0} /></TreeRow>
              <TreeRow><Trunk v="full"><Expander /></Trunk><Check on /></TreeRow>
              <TreeRow><Trunk v="full" dots={0} /><Branch v="top" h={20} /></TreeRow>
              <TreeRow><Trunk v="full"><Expander plus /></Trunk><Check /></TreeRow>
              <TreeRow><Trunk v="full" /><Check /><NodeName><Fit w={141}>Map Layers</Fit></NodeName></TreeRow>
              <TreeRow><Trunk v="top"><Expander /></Trunk><Check on /><NodeName><Fit w={99}>Terrains</Fit></NodeName></TreeRow>
              <TreeRow><Trunk v="none" dots={0} /><Branch v="top" h={20} /><Check on /><NodeName $hot><Fit w={88}>Terrain</Fit></NodeName></TreeRow>
            </TreePanel>
            <TabPanel><MessageBox /></TabPanel>
            <Tabs>
              <Tab $active $w={141} $gap={0}><Fit w={124}>Messages</Fit></Tab>
              <Tab $w={92} $gap={0}><Fit w={68}>Views</Fit></Tab>
              <Tab $w={156} $gap={2}><Fit w={141}>Profile Lines</Fit></Tab>
              <Tab $w={195} $gap={2}><Fit w={178}>Active Features</Fit></Tab>
              <Tab $w={165} $gap={2}><Fit w={148}>Layer Values</Fit></Tab>
            </Tabs>
            <StatusBar><Fit w={499}>{"(1070770.78, 1573798.24  1 pixel = 11.57 m)"}</Fit></StatusBar>
          </LeftColumn>
          <MapPanel>
            <Terrain />
            <TitlePlate><Fit w={272}>Selected: 'Terrain'</Fit></TitlePlate>
            <LegendPlate>
              <LegendLabels>
                {legend.map((v) => (
                  <LegendItem key={v}><Fit w={50}>{v}</Fit><Tick /></LegendItem>
                ))}
              </LegendLabels>
              <Ramp />
            </LegendPlate>
            <ScalePlate><Fit w={54}>1 km</Fit><ScaleBracket /></ScalePlate>
          </MapPanel>
        </Body>

        <Menu $x={94} $y={115} $w={520} $pad={3}>
          <Items items={projectMenu} iconWidth={71} />
        </Menu>
        <Menu $x={612} $y={450} $w={746} $pad={2}>
          <Items items={layerMenu} iconWidth={70} />
        </Menu>
        <Ring />
      </Window>
    </Desktop>
  );
}
